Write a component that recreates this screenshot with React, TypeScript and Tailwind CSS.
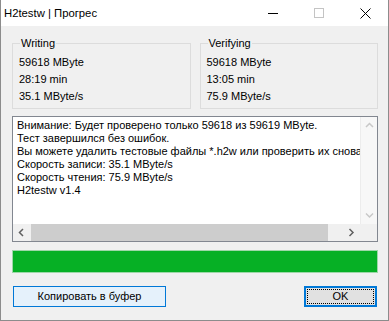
import React from 'react';

const Chevron = ({ dir, color }: { dir: 'up' | 'down' | 'left' | 'right'; color: string }) => {
  const paths = {
    up: 'M1 5 L4.5 1.5 L8 5',
    down: 'M1 1.5 L4.5 5 L8 1.5',
    left: 'M5 1 L1.5 4.5 L5 8',
    right: 'M1.5 1 L5 4.5 L1.5 8',
  };
  const vertical = dir === 'up' || dir === 'down';
  return (
    <svg width={vertical ? 9 : 7} height={vertical ? 7 : 9} viewBox={vertical ? '0 0 9 7' : '0 0 7 9'}>
      <path d={paths[dir]} fill="none" stroke={color} strokeWidth="1.5" />
    </svg>
  );
};

const Group = ({ title, rows }: { title: string; rows: string[] }) => (
  <fieldset className="border border-[#dcdcdc] px-[6px] pt-[3px] pb-[3px] min-w-0">
    <legend className="ml-[1px] px-[1px] leading-[16px]">{title}</legend>
    {rows.map((r) => (
      <div key={r} className="leading-[17px]">
        {r}
      </div>
    ))}
  </fieldset>
);

const App = () => {
  const lines = [
    'Внимание: Будет проверено только 59618 из 59619 MByte.',
    'Тест завершился без ошибок.',
    'Вы можете удалить тестовые файлы *.h2w или проверить их снова.',
    'Скорость записи: 35.1 MByte/s',
    'Скорость чтения: 75.9 MByte/s',
    'H2testw v1.4',
  ];

  return (
    <div className="w-[389px] h-[321px] bg-[#f0f0f0] border-x border-b border-[#8c8c8c] flex flex-col text-[11px] text-black font-['Liberation_Sans',Arial,sans-serif]">
      {/* Title bar */}
      <div className="h-[26px] bg-white flex items-center shrink-0">
        <span className="flex-1 pl-[3px] text-[11.3px]">H2testw | Прогрес</span>
        <div className="w-[46px] h-full flex items-center justify-center">
          <div className="w-[10px] h-px bg-black" />
        </div>
        <div className="w-[46px] h-full flex items-center justify-center">
          <div className="w-[10px] h-[10px] border border-[#c4c4c4]" />
        </div>
        <div className="w-[46px] h-full flex items-center justify-center">
          <svg width="11" height="11" viewBox="0 0 11 11">
            <path d="M0.5 0.5 L10.5 10.5 M10.5 0.5 L0.5 10.5" stroke="#000" strokeWidth="1" />
          </svg>
        </div>
      </div>

      {/* Body */}
      <div className="flex-1 flex flex-col pl-[11px] pr-[10px] pt-[9px]">
        <div className="grid grid-cols-2 gap-[9px]">
          <Group title="Writing" rows={['59618 MByte', '28:19 min', '35.1 MByte/s']} />
          <Group title="Verifying" rows={['59618 MByte', '13:05 min', '75.9 MByte/s']} />
        </div>

        {/* Log box */}
        <div className="mt-[7px] h-[126px] border border-[#828790] bg-white flex flex-col">
          <div className="flex flex-1 min-h-0">
            <div className="flex-1 min-w-0 overflow-hidden whitespace-pre pl-[4px] pt-[2px] leading-[13px]">
              {lines.map((l) => (
                <div key={l}>{l}</div>
              ))}
            </div>
            <div className="w-[17px] bg-[#f7f7f7] border-l border-[#ececec] flex flex-col justify-between">
              <div className="h-[17px] flex items-center justify-center">
                <Chevron dir="up" color="#c8c8c8" />
              </div>
              <div className="h-[17px] flex items-center justify-center">
                <Chevron dir="down" color="#c8c8c8" />
              </div>
            </div>
          </div>
          <div className="h-[17px] flex bg-[#f0f0f0]">
            <div className="w-[17px] flex items-center justify-center">
              <Chevron dir="left" color="#606060" />
            </div>
            <div className="flex-1 flex">
              <div className="ml-[1px] w-[297px] bg-[#cdcdcd]" />
            </div>
            <div className="w-[17px] flex items-center justify-center">
              <Chevron dir="right" color="#606060" />
            </div>
            <div className="w-[17px] bg-[#f0f0f0]" />
          </div>
        </div>

        {/* Progress */}
        <div className="mt-[8px] h-[23px] border border-[#9ed7a8] bg-[#06b025]" />

        {/* Buttons */}
        <div className="mt-[13px] flex justify-between">
          <button className="ml-[1px] w-[153px] h-[21px] border border-[#0078d7] bg-[#e5f1fb] flex items-center justify-center">
            Копировать в буфер
          </button>
          <button className="mr-[1px] w-[73px] h-[21px] border-2 border-[#0078d7] bg-[#e1e1e1] p-px">
            <div className="w-full h-full border border-dotted border-black flex items-center justify-center">
              OK
            </div>
          </button>
        </div>
      </div>
    </div>
  );
};

export default App;
